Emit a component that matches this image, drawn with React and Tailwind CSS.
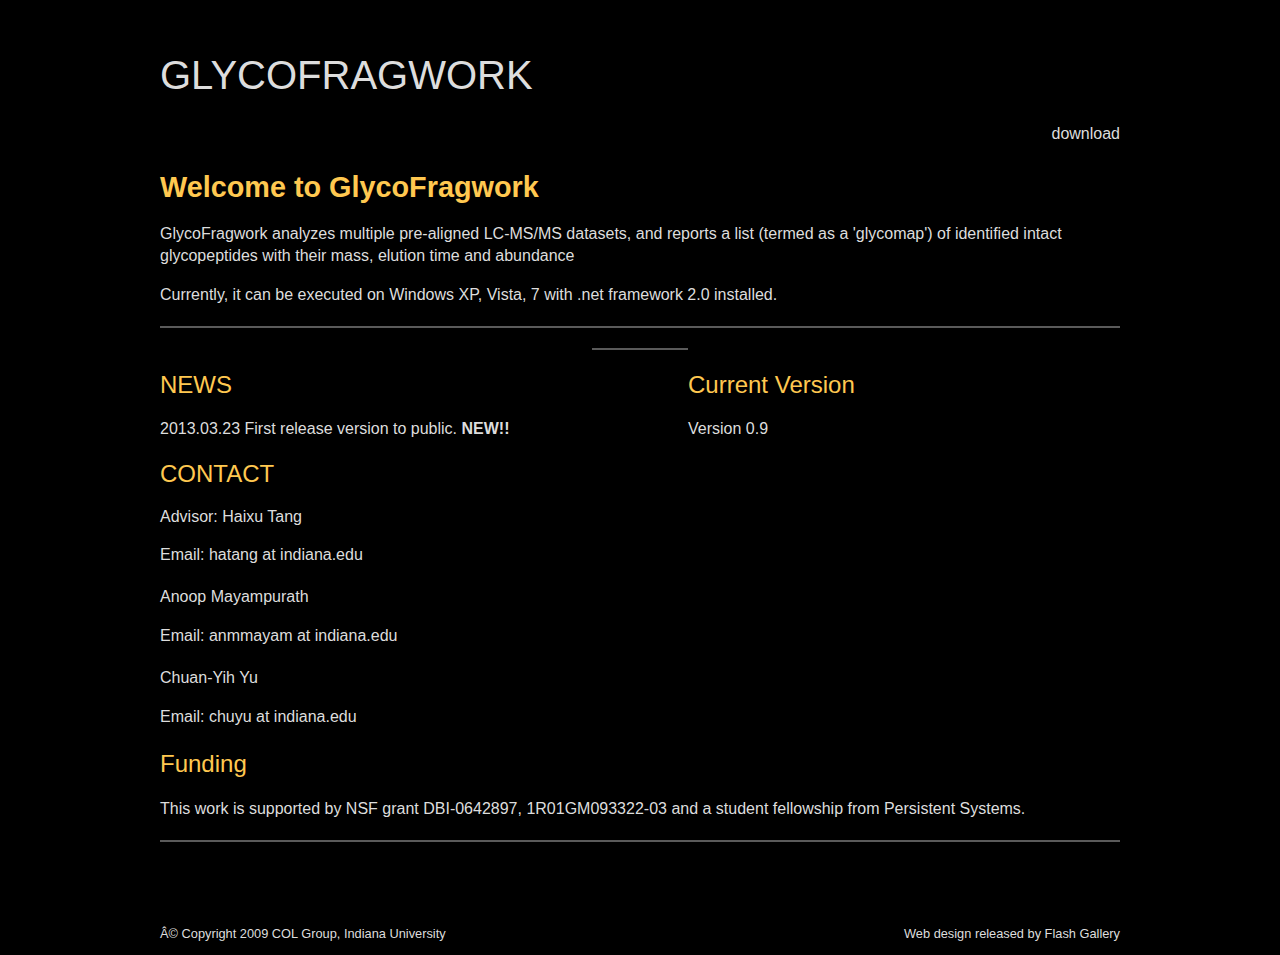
import React from 'react';

const contacts = [
  { name: 'Advisor: Haixu Tang', email: 'Email: hatang at indiana.edu' },
  { name: 'Anoop Mayampurath', email: 'Email: anmmayam at indiana.edu' },
  { name: 'Chuan-Yih Yu', email: 'Email: chuyu at indiana.edu' },
];

const App = () => {
  return (
    <div className="min-h-[955px] bg-black text-[#dddddd] font-['Liberation_Sans',Arial,sans-serif]">
      <div className="w-[960px] mx-auto pt-[48px]">
        {/* Header */}
        <h1 className="text-[40px] leading-[54px] text-[#dddddd] font-normal">GLYCOFRAGWORK</h1>
        <div className="flex justify-end mt-[22px]">
          <a href="#" className="text-base leading-[20px]">download</a>
        </div>

        {/* Intro */}
        <h2 className="mt-[26px] text-[28.8px] leading-[34px] font-bold text-[#ffc850]">Welcome to GlycoFragwork</h2>
        <p className="mt-[19px] text-base leading-[22px]">
          GlycoFragwork analyzes multiple pre-aligned LC-MS/MS datasets, and reports a list (termed as a 'glycomap') of identified intact glycopeptides with their mass, elution time and abundance
        </p>
        <p className="mt-[17px] text-base leading-[22px]">
          Currently, it can be executed on Windows XP, Vista, 7 with .net framework 2.0 installed.
        </p>
        <hr className="mt-[20px] border-0 border-t-2 border-[#5a5a5a]" />
        <div className="flex justify-center mt-[20px]">
          <div className="w-[96px] border-t-2 border-[#5a5a5a]" />
        </div>

        {/* News / version */}
        <div className="flex mt-[20px]">
          <div className="w-[528px]">
            <h3 className="text-2xl leading-[30px] text-[#ffc850]">NEWS</h3>
            <p className="mt-[19px] text-base leading-[20px]">
              2013.03.23 First release version to public. <b>NEW!!</b>
            </p>
          </div>
          <div className="flex-1">
            <h3 className="text-2xl leading-[30px] text-[#ffc850]">Current Version</h3>
            <p className="mt-[19px] text-base leading-[20px]">Version 0.9</p>
          </div>
        </div>

        {/* Contact */}
        <h3 className="mt-[20px] text-2xl leading-[30px] text-[#ffc850]">CONTACT</h3>
        <div className="mt-[18px]">
          {contacts.map((c, i) => (
            <div key={c.name} className={i > 0 ? 'mt-[22px]' : ''}>
              <p className="text-base leading-[20px]">{c.name}</p>
              <p className={(i > 0 ? 'mt-[19px]' : 'mt-[18px]') + ' text-base leading-[20px]'}>{c.email}</p>
            </div>
          ))}
        </div>

        {/* Funding */}
        <h3 className="mt-[22px] text-2xl leading-[30px] text-[#ffc850]">Funding</h3>
        <p className="mt-[20px] text-base leading-[20px]">
          This work is supported by NSF grant DBI-0642897, 1R01GM093322-03 and a student fellowship from Persistent Systems.
        </p>
        <hr className="mt-[21px] border-0 border-t-2 border-[#5a5a5a]" />

        {/* Footer */}
        <div className="flex justify-between mt-[84px] text-[12.8px] leading-[16px] pb-[14px]">
          <span>Â© Copyright 2009 COL Group, Indiana University</span>
          <span>Web design released by Flash Gallery</span>
        </div>
      </div>
    </div>
  );
};

export default App;
